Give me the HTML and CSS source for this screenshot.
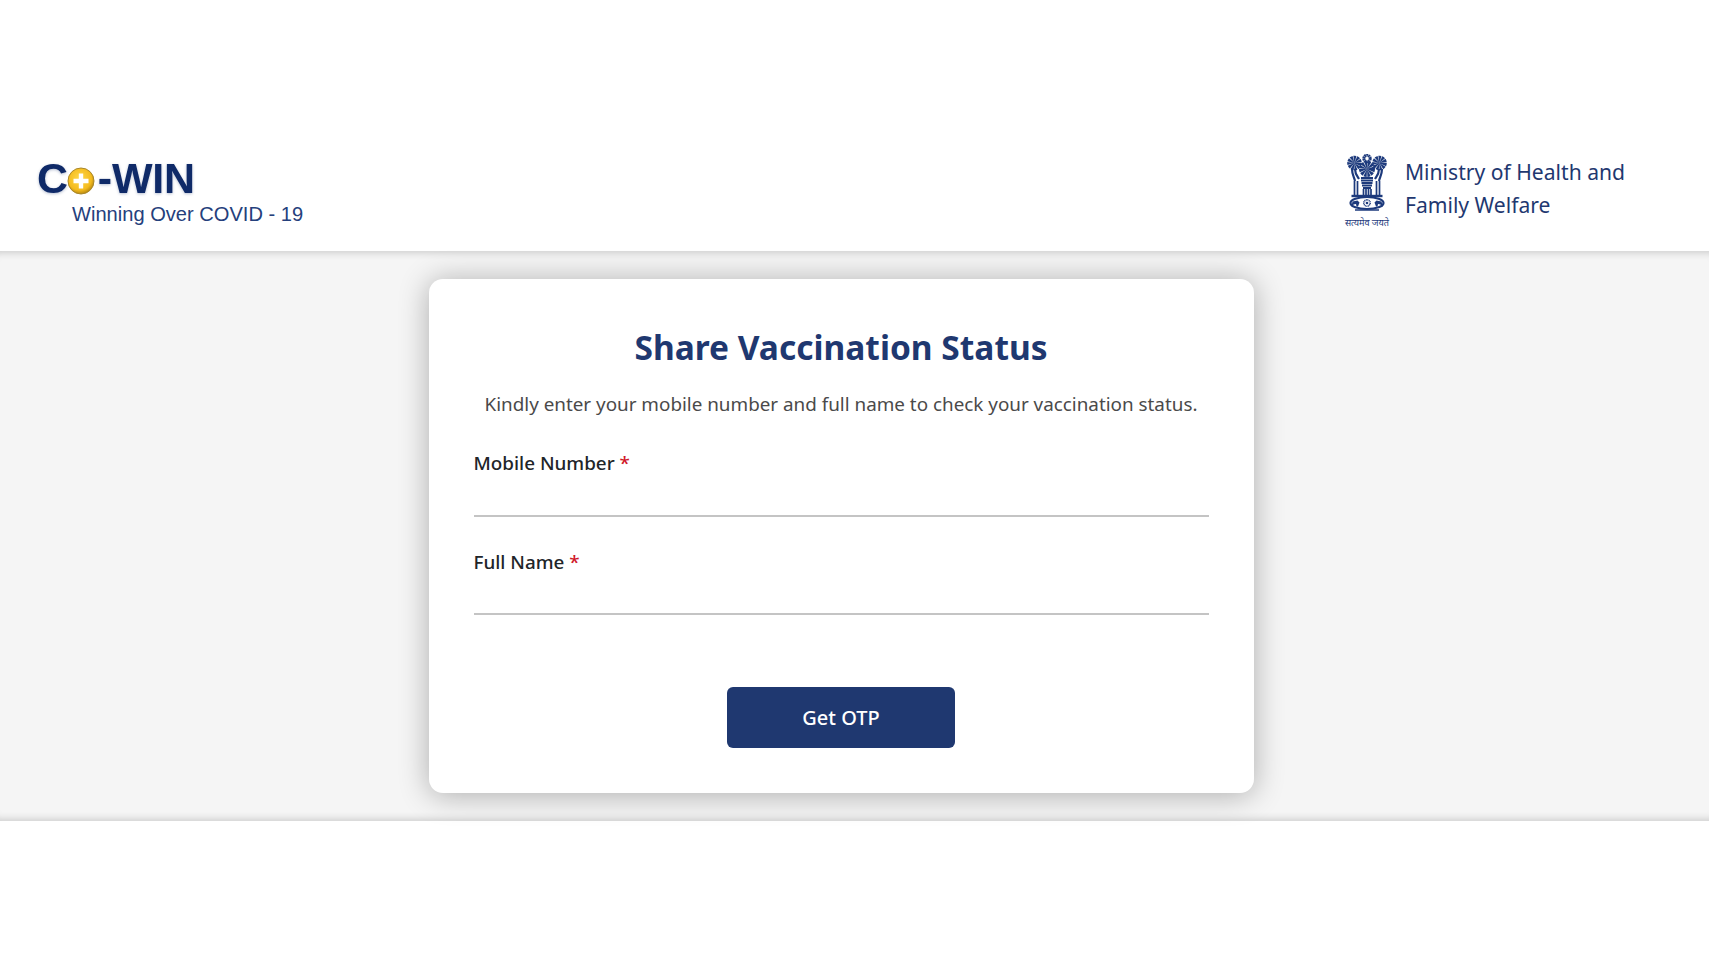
FILE: index.html
```html
<!DOCTYPE html>
<html lang="en">
<head>
<meta charset="utf-8">
<title>Share Vaccination Status</title>
<link rel="stylesheet" href="styles.css">
</head>
<body>
<header class="header">
  <div class="brand">
    <div class="brand-name">C<svg class="brand-o" viewBox="0 0 28 28"><defs><radialGradient id="gold" cx="45%" cy="40%" r="60%"><stop offset="0" stop-color="#ffd84a"/><stop offset="0.75" stop-color="#f4bb1e"/><stop offset="1" stop-color="#b98a10"/></radialGradient></defs><circle cx="14" cy="14" r="13" fill="url(#gold)" stroke="#a8862a" stroke-width="1"/><path d="M14 6.500v15M6.500 14h15" stroke="#fff" stroke-width="4.400" fill="none"/></svg>-WIN</div>
    <div class="brand-tag">Winning Over COVID - 19</div>
  </div>
  <div class="ministry">
    <div class="emblem">
      <svg class="emblem-art" viewBox="0 0 44 64">
        <g fill="none" stroke="#1d3a7c">
          <circle cx="22" cy="4.500" r="3.200" stroke-width="3" stroke-dasharray="1.600 .4"/>
          <circle cx="9.500" cy="9" r="3.800" stroke-width="7" stroke-dasharray="1.700 .4"/>
          <circle cx="34.500" cy="9" r="3.800" stroke-width="7" stroke-dasharray="1.700 .4"/>
          <circle cx="22" cy="15" r="4" stroke-width="8" stroke-dasharray="1.700 .4"/>
          <path d="M7 15c0 5 2 8 3 12M37 15c0 5-2 8-3 12M10 15c0 5 2 7 4 10M34 15c0 5-2 7-4 10" stroke-width="2.200"/>
          <path d="M16 24h12M16 26.500h12M16.500 29h11M17 31.500h10M18 34h8" stroke-width="2"/>
          <path d="M9.500 27v14M12.500 27v14M34.500 27v14M31.500 27v14M18.500 35v6M21 35v6M23.500 35v6M26 35v6" stroke-width="1.700"/>
          <path d="M6.500 42h31" stroke-width="2.400"/>
          <ellipse cx="22" cy="49" rx="16.500" ry="6" stroke-width="2.200"/>
          <path d="M10 56h24" stroke-width="1.500"/>
          <circle cx="22" cy="49" r="3.200" stroke-width="1.500" stroke-dasharray="1 .5"/>
        </g>
        <g fill="#1d3a7c">
          <circle cx="22" cy="49" r="1.300"/>
          <path d="M7.500 47.500l5-1 2 2-1.500 4h-1.500l-.5-2.500-2.500.5-1 2H6.500zM36.500 47.500l-5-1-2 2 1.500 4h1.500l.5-2.500 2.500.5 1 2h1.500z"/>
        </g>
      </svg>
      <span class="motto">सत्यमेव जयते</span>
    </div>
    <div class="ministry-name">Ministry of Health and<br>Family Welfare</div>
  </div>
</header>
<main class="main">
  <form class="card">
    <h1 class="title">Share Vaccination Status</h1>
    <p class="intro">Kindly enter your mobile number and full name to check your vaccination status.</p>
    <div class="field">
      <label class="label" for="mobile">Mobile Number <span class="req">*</span></label>
      <input class="input" id="mobile" type="text">
    </div>
    <div class="field">
      <label class="label" for="name">Full Name <span class="req">*</span></label>
      <input class="input" id="name" type="text">
    </div>
    <div class="actions"><button class="btn" type="button">Get OTP</button></div>
  </form>
</main>
</body>
</html>
```
FILE: styles.css
```css
* { box-sizing: border-box; }
html, body { margin: 0; height: 100%; background: #fff; }
body { font-family: "Noto Sans", "Open Sans", sans-serif; overflow: hidden; }

.header {
  height: 251px;
  padding: 155px 84px 0 37px;
  display: flex;
  justify-content: space-between;
  align-items: flex-start;
  background: #fff;
}
.brand { width: 300px; }
.brand-name {
  display: flex;
  align-items: center;
  height: 44px;
  margin-top: 1px;
  font: bold 43px/44px "Liberation Sans", Arial, sans-serif;
  color: #0f2a68;
  text-shadow: 0 1px 3px rgba(15, 42, 104, .3);
  letter-spacing: -.2px;
  filter: blur(.4px);
}
.brand-o { width: 28px; height: 28px; margin: 5px 3px 0 -1px; }
.brand-tag {
  margin: 2px 0 0 35px;
  font: 20.100px/24px "Liberation Sans", Arial, sans-serif;
  color: #25407c;
}

.ministry { display: flex; gap: 15px; align-items: flex-start; }
.emblem { width: 46px; display: flex; flex-direction: column; align-items: center; margin-top: -1px; }
.emblem-art { width: 44px; height: 64px; display: block; }
.motto { font: 9.100px/10px "Noto Sans", sans-serif; color: #1d3a7c; white-space: nowrap; }
.ministry-name { font-size: 21.100px; line-height: 33px; color: #1f3870; }

.main {
  height: 570px;
  padding: 28px 27px 0 0;
  display: flex;
  justify-content: center;
  background: #f5f5f5;
  box-shadow: inset 0 9px 8px -8px rgba(0, 0, 0, .2), inset 0 -9px 8px -8px rgba(0, 0, 0, .2);
}
.card {
  width: 825px;
  height: 514px;
  padding: 44px 45px 0;
  background: #fff;
  border-radius: 14px;
  box-shadow: 0 2px 30px rgba(0, 0, 0, .3);
}
.title {
  margin: 0;
  font-size: 33.500px;
  line-height: 48px;
  font-weight: 700;
  text-align: center;
  color: #1f3870;
}
.intro {
  margin: 19px 0 0;
  font-size: 18.850px;
  line-height: 28px;
  text-align: center;
  color: #4a4a4a;
}
.field { height: 68px; display: flex; flex-direction: column; }
.intro + .field { margin-top: 31px; }
.field + .field { height: 67px; margin-top: 31px; }
.label { font-size: 18.850px; line-height: 28px; font-weight: 500; color: #212529; }
.req { color: #d0182a; }
.input {
  margin-top: auto;
  height: 30px;
  border: 0;
  border-bottom: 2px solid #c4c4c4;
  background: transparent;
  outline: none;
}
.actions { margin-top: 72px; display: flex; justify-content: center; }
.btn {
  width: 228px;
  height: 61px;
  border: 0;
  border-radius: 6px;
  background: #1f3870;
  color: #fff;
  font: 500 20px/28px "Noto Sans", sans-serif;
}
```
